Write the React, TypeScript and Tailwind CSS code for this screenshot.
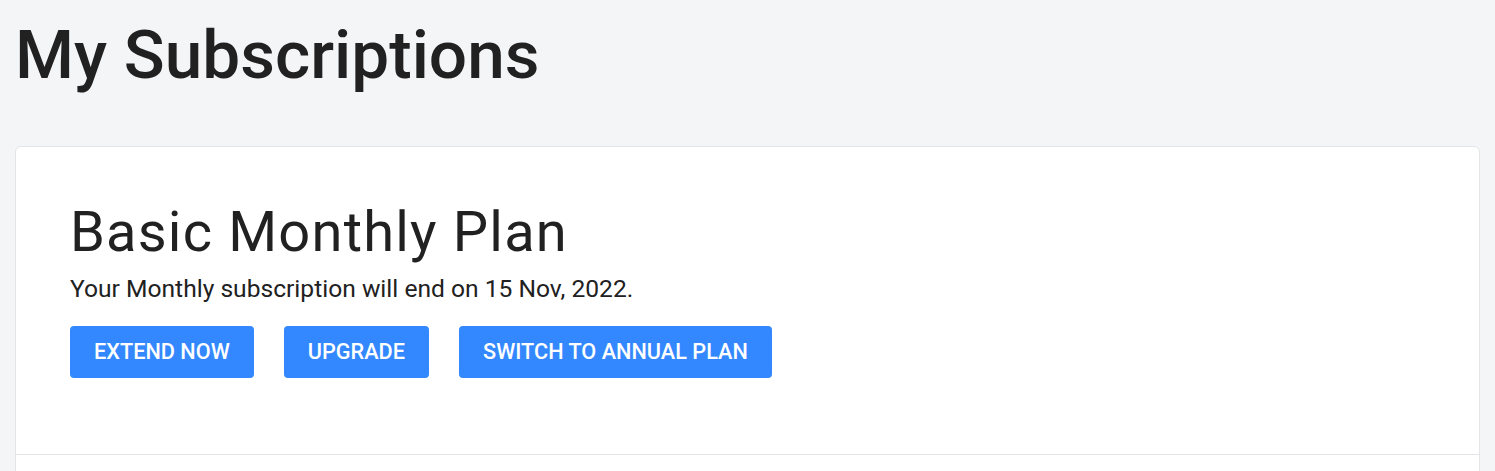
import React from 'react';

// --- Bouton d'action ---
function PlanButton({ label }: { label: string }) {
  return (
    <button className="h-[52px] px-6 rounded-[4px] bg-[#3388ff] text-white text-[21.7px] font-medium uppercase leading-none">
      {label}
    </button>
  );
}

// --- Page principale ---
export default function App() {
  return (
    <div
      className="min-h-screen bg-[#f4f5f7] px-[15px] text-[#212121]"
      style={{ fontFamily: 'Roboto, "Noto Sans", sans-serif' }}
    >
      <h1 className="pt-[21px] text-[67.5px] leading-none font-medium">My Subscriptions</h1>

      <div className="mt-[57px] bg-white border border-[#e3e5e8] rounded-[6px]">
        <section className="pl-[54px] pt-[57px] pb-[76px] border-b border-[#e3e5e8]">
          <h2 className="text-[56px] leading-none font-normal tracking-[1.2px]">Basic Monthly Plan</h2>
          <p className="mt-[17px] text-[24.6px] leading-none">Your Monthly subscription will end on 15 Nov, 2022.</p>
          <div className="mt-[25px] flex gap-[30px]">
            <PlanButton label="Extend Now" />
            <PlanButton label="Upgrade" />
            <PlanButton label="Switch to Annual Plan" />
          </div>
        </section>
        <div className="h-[60px]" />
      </div>
    </div>
  );
}
